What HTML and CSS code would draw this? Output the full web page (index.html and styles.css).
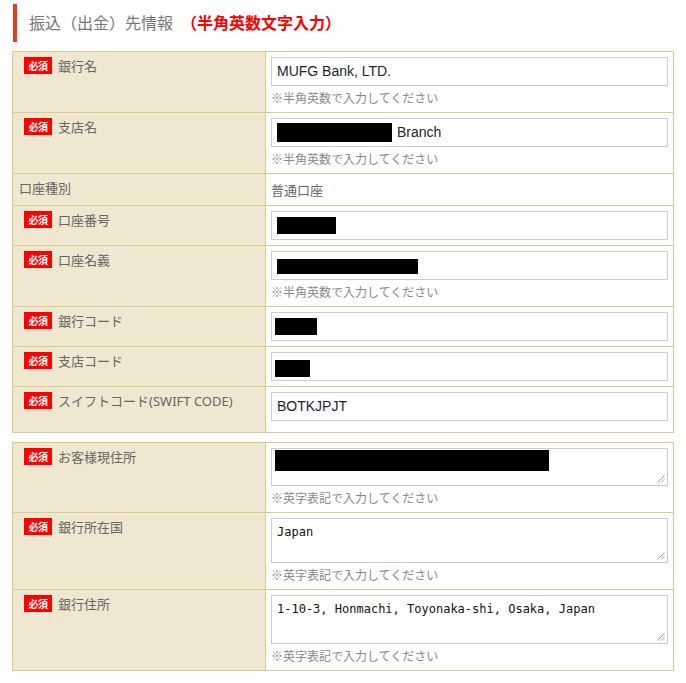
FILE: index.html
```html
<!DOCTYPE html>
<html lang="ja">
<head>
    <meta charset="UTF-8">
    <meta name="viewport" content="width=device-width, initial-scale=1.0">
    <title>振込（出金）先情報</title>
    <link rel="stylesheet" href="styles.css">
</head>
<body>
    <div class="page">
        <h2 class="section-title">振込（出金）先情報<span class="title-note">（半角英数文字入力）</span></h2>

        <div class="form-table">
            <div class="form-row">
                <div class="form-label"><span class="badge">必須</span>銀行名</div>
                <div class="form-value">
                    <div class="field">MUFG Bank, LTD.</div>
                    <p class="hint">※半角英数で入力してください</p>
                </div>
            </div>
            <div class="form-row">
                <div class="form-label"><span class="badge">必須</span>支店名</div>
                <div class="form-value">
                    <div class="field"><span class="redact redact-branch"></span>Branch</div>
                    <p class="hint">※半角英数で入力してください</p>
                </div>
            </div>
            <div class="form-row">
                <div class="form-label">口座種別</div>
                <div class="form-value">普通口座</div>
            </div>
            <div class="form-row">
                <div class="form-label"><span class="badge">必須</span>口座番号</div>
                <div class="form-value">
                    <div class="field"><span class="redact redact-number"></span></div>
                </div>
            </div>
            <div class="form-row">
                <div class="form-label"><span class="badge">必須</span>口座名義</div>
                <div class="form-value">
                    <div class="field"><span class="redact redact-holder"></span></div>
                    <p class="hint">※半角英数で入力してください</p>
                </div>
            </div>
            <div class="form-row">
                <div class="form-label"><span class="badge">必須</span>銀行コード</div>
                <div class="form-value">
                    <div class="field"><span class="redact redact-bank"></span></div>
                </div>
            </div>
            <div class="form-row">
                <div class="form-label"><span class="badge">必須</span>支店コード</div>
                <div class="form-value">
                    <div class="field"><span class="redact redact-store"></span></div>
                </div>
            </div>
            <div class="form-row">
                <div class="form-label"><span class="badge">必須</span>スイフトコード(SWIFT CODE)</div>
                <div class="form-value form-value-last">
                    <div class="field">BOTKJPJT</div>
                </div>
            </div>
        </div>

        <div class="form-table">
            <div class="form-row">
                <div class="form-label"><span class="badge">必須</span>お客様現住所</div>
                <div class="form-value">
                    <div class="field area area-sm">
                        <span class="redact redact-address"></span>
                        <svg class="grip" width="8" height="8" viewBox="0 0 8 8"><path d="M7.5 0.5 L0.5 7.5 M7.5 4 L4 7.5" stroke="#999" stroke-width="1" fill="none"/></svg>
                    </div>
                    <p class="hint">※英字表記で入力してください</p>
                </div>
            </div>
            <div class="form-row">
                <div class="form-label"><span class="badge">必須</span>銀行所在国</div>
                <div class="form-value">
                    <div class="field area area-md">Japan
                        <svg class="grip" width="8" height="8" viewBox="0 0 8 8"><path d="M7.5 0.5 L0.5 7.5 M7.5 4 L4 7.5" stroke="#999" stroke-width="1" fill="none"/></svg>
                    </div>
                    <p class="hint">※英字表記で入力してください</p>
                </div>
            </div>
            <div class="form-row">
                <div class="form-label"><span class="badge">必須</span>銀行住所</div>
                <div class="form-value">
                    <div class="field area area-lg">1-10-3, Honmachi, Toyonaka-shi, Osaka, Japan
                        <svg class="grip" width="8" height="8" viewBox="0 0 8 8"><path d="M7.5 0.5 L0.5 7.5 M7.5 4 L4 7.5" stroke="#999" stroke-width="1" fill="none"/></svg>
                    </div>
                    <p class="hint">※英字表記で入力してください</p>
                </div>
            </div>
        </div>
    </div>
</body>
</html>
```

FILE: styles.css
```css
* {
    margin: 0;
    padding: 0;
    box-sizing: border-box;
}

body {
    font-family: "Noto Sans CJK JP", "Noto Sans", sans-serif;
    background: #ffffff;
    color: #666666;
}

.page {
    padding: 4px 0 0 12px;
}

.section-title {
    margin-left: 1px;
    margin-bottom: 9px;
    height: 38px;
    border-left: 4px solid #e63c1e;
    padding-left: 12px;
    font-size: 16px;
    font-weight: normal;
    line-height: 37px;
    color: #777777;
}

.title-note {
    margin-left: 8px;
    color: #ff0000;
    font-weight: bold;
}

.form-table {
    width: 662px;
    border: 1px solid #dccb8e;
}

.form-table + .form-table {
    margin-top: 9px;
}

.form-row {
    display: flex;
}

.form-row + .form-row {
    border-top: 1px solid #dccb8e;
}

.form-label {
    width: 253px;
    flex-shrink: 0;
    display: flex;
    align-items: flex-start;
    gap: 6px;
    padding: 4px 6px 5px;
    background: #f0e7d1;
    border-right: 1px solid #dccb8e;
    font-family: "Noto Sans", "Noto Sans CJK JP", sans-serif;
    font-size: 13px;
    line-height: 21px;
    color: #666666;
}

.badge {
    width: 28px;
    height: 17px;
    margin: 1px 0 0 5px;
    background: #ff0000;
    color: #ffffff;
    font-family: "Noto Sans CJK JP", sans-serif;
    font-size: 10px;
    font-weight: bold;
    line-height: 17px;
    text-align: center;
    letter-spacing: -0.5px;
}

.form-value {
    flex: 1;
    padding: 5px;
    font-size: 13px;
    line-height: 21px;
    color: #666666;
}

.form-value-last {
    padding-bottom: 11px;
}

.field {
    position: relative;
    display: flex;
    align-items: center;
    height: 29px;
    padding: 0 5px;
    border: 1px solid #cccccc;
    background: #ffffff;
    font-family: "Liberation Sans", Arial, sans-serif;
    font-size: 14px;
    color: #1c2430;
}

.field.area {
    display: block;
    padding: 4px 5px;
    font-family: "DejaVu Sans Mono", "Liberation Mono", monospace;
    font-size: 12px;
    line-height: 18px;
    color: #111111;
}

.area-sm { height: 38px; }
.area-md { height: 45px; }
.area-lg { height: 49px; }

.grip {
    position: absolute;
    right: 2px;
    bottom: 2px;
}

.hint {
    margin-top: 2px;
    font-size: 12px;
    line-height: 19px;
    color: #888888;
}

.redact {
    display: inline-block;
    background: #000000;
}

.redact-branch {
    width: 115px;
    height: 19px;
    margin-right: 5px;
}

.redact-number {
    width: 59px;
    height: 17px;
}

.redact-holder {
    width: 141px;
    height: 15px;
    margin-top: 2px;
}

.redact-bank {
    width: 42px;
    height: 17px;
    margin-left: -2px;
}

.redact-store {
    width: 35px;
    height: 17px;
    margin-left: -2px;
    margin-top: 3px;
}

.redact-address {
    display: block;
    width: 274px;
    height: 21px;
    margin: -3px 0 0 -2px;
}
```
